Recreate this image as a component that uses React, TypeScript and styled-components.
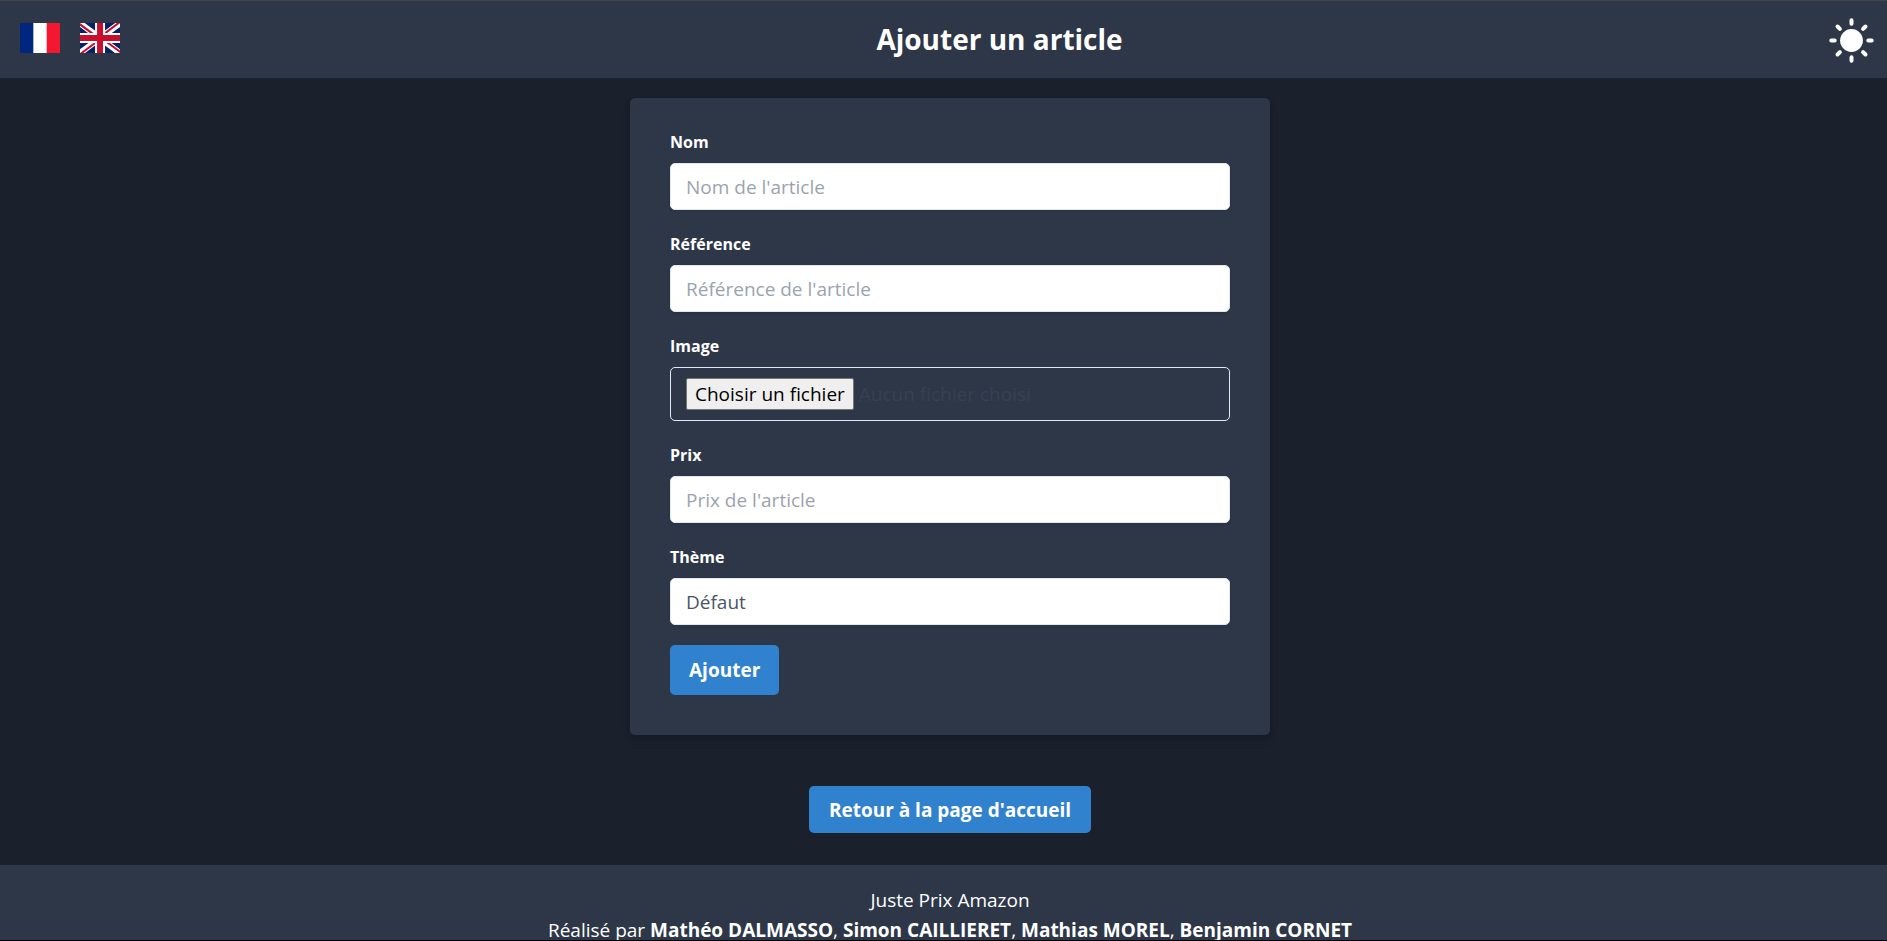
import React from "react";
import styled, { createGlobalStyle, css } from "styled-components";

const colors = {
  page: "#1a202c",
  surface: "#2d3748",
  line: "#e2e8f0",
  primary: "#3182ce",
  placeholder: "#9ca3af",
  text: "#4a5568",
};

const GlobalStyle = createGlobalStyle`
  *, *::before, *::after { box-sizing: border-box; }
  body {
    margin: 0;
    overflow: hidden;
    background: ${colors.page};
    color: #fff;
    font-family: "Segoe UI", "Open Sans", "Noto Sans", sans-serif;
    font-size: 19px;
    line-height: 30px;
  }
  h1, p { margin: 0; }
  button, input, select { font: inherit; }
`;

const Viewport = styled.div`
  height: 100vh;
  overflow: hidden;
  border-top: 1px solid #444;
  border-bottom: 1px solid #000;
`;

const Page = styled.div`
  display: flex;
  flex-direction: column;
  width: calc(100% + 13px);
`;

const Header = styled.header`
  display: flex;
  align-items: center;
  padding: 11px 20px 9px;
  background: ${colors.surface};
`;

const Languages = styled.nav`
  display: flex;
  gap: 20px;
  min-width: 156px;
  padding-bottom: 5px;
`;

const IconButton = styled.button`
  display: block;
  padding: 0;
  border: 0;
  background: none;
  cursor: pointer;

  svg { display: block; }
`;

const Title = styled.h1`
  flex: 1;
  padding-bottom: 4px;
  font-size: 28px;
  font-weight: 700;
  line-height: 40px;
  text-align: center;
`;

const Main = styled.main`
  display: flex;
  flex-direction: column;
  align-items: center;
  gap: 51px;
  padding: 20px 20px 32px;
`;

const Card = styled.form`
  display: flex;
  flex-direction: column;
  align-items: flex-start;
  gap: 20px;
  width: 100%;
  max-width: 640px;
  padding: 31px 40px 40px;
  border-radius: 5px;
  background: ${colors.surface};
  box-shadow: 0 5px 8px rgba(0, 0, 0, 0.1), 0 2px 5px rgba(0, 0, 0, 0.06);
`;

const Field = styled.div`
  display: flex;
  flex-direction: column;
  gap: 8px;
  width: 100%;
`;

const Label = styled.label`
  padding-top: 1px;
  font-size: 16px;
  font-weight: 700;
  line-height: 26px;

  ${Field}:first-child > & { padding-top: 0; }
`;

const control = css`
  width: 100%;
  height: 47px;
  padding: 1px 15px 0;
  border: 1px solid ${colors.line};
  border-radius: 5px;
  background: #fff;
  color: ${colors.text};
  box-shadow: 0 1px 3px rgba(0, 0, 0, 0.1);
`;

const TextInput = styled.input`
  ${control}
  &::placeholder { color: ${colors.placeholder}; opacity: 1; }
`;

const Select = styled.select`
  ${control}
  appearance: none;
`;

const FileBox = styled.div`
  position: relative;
  display: flex;
  align-items: center;
  gap: 5px;
  height: 54px;
  padding: 0 15px;
  border: 1px solid ${colors.line};
  border-radius: 5px;
  color: #374151;
`;

const FileInput = styled.input`
  position: absolute;
  inset: 0;
  width: 100%;
  opacity: 0;
  cursor: pointer;
`;

const FileButton = styled.span`
  padding: 0 8px;
  border: 1px solid #767676;
  border-radius: 2px;
  background: #efefef;
  color: #000;
`;

const action = css`
  border: 0;
  border-radius: 5px;
  background: ${colors.primary};
  color: #fff;
  font-weight: 700;
  text-decoration: none;
  cursor: pointer;
`;

const SubmitButton = styled.button`
  ${action}
  padding: 10px 19px;
`;

const HomeLink = styled.a`
  ${action}
  padding: 9px 20px 8px;
`;

const Footer = styled.footer`
  padding: 20px;
  background: ${colors.surface};
  text-align: center;
`;

const FrenchFlag = () => (
  <svg width="40" height="30" viewBox="0 0 640 480" aria-hidden="true">
    <path fill="#fff" d="M0 0h640v480H0z" />
    <path fill="#00267f" d="M0 0h213.3v480H0z" />
    <path fill="#f31830" d="M426.7 0H640v480H426.7z" />
  </svg>
);

const BritishFlag = () => (
  <svg width="40" height="30" viewBox="0 0 640 480" aria-hidden="true">
    <path fill="#012169" d="M0 0h640v480H0z" />
    <path fill="#fff" d="m75 0 244 181L562 0h78v62L400 241l240 178v61h-80L320 301 81 480H0v-60l239-178L0 64V0z" />
    <path fill="#c8102e" d="m424 281 216 159v40L369 281zm-184 20 6 35L54 480H0zM640 0v3L391 191l2-44L590 0zM0 0l239 176h-60L0 42z" />
    <path fill="#fff" d="M241 0v480h160V0zM0 160v160h640V160z" />
    <path fill="#c8102e" d="M0 193v96h640v-96zM273 0v480h96V0z" />
  </svg>
);

const SunIcon = () => (
  <svg width="57" height="57" viewBox="-28.5 -28.5 57 57" aria-hidden="true">
    <circle r="11.4" fill="#fff" />
    <path
      fill="none"
      stroke="#fff"
      strokeWidth="4"
      strokeLinecap="round"
      d="M0-20.2v3.4M0 16.8v3.4M-20.2 0h3.4M16.8 0h3.4M-14-14l2.4 2.4M11.6 11.6l2.4 2.4M-14 14l2.4-2.4M11.6-11.6l2.4-2.4"
    />
  </svg>
);

export default function App() {
  return (
    <Viewport lang="fr">
      <GlobalStyle />
      <Page>
        <Header>
          <Languages aria-label="Langue">
            <IconButton type="button" aria-label="Français"><FrenchFlag /></IconButton>
            <IconButton type="button" aria-label="English"><BritishFlag /></IconButton>
          </Languages>
          <Title>Ajouter un article</Title>
          <IconButton type="button" aria-label="Mode clair"><SunIcon /></IconButton>
        </Header>
        <Main>
          <Card onSubmit={(event) => event.preventDefault()}>
            <Field>
              <Label htmlFor="name">Nom</Label>
              <TextInput id="name" type="text" placeholder="Nom de l'article" />
            </Field>
            <Field>
              <Label htmlFor="reference">Référence</Label>
              <TextInput id="reference" type="text" placeholder="Référence de l'article" />
            </Field>
            <Field>
              <Label htmlFor="image">Image</Label>
              <FileBox>
                <FileButton>Choisir un fichier</FileButton>
                <span>Aucun fichier choisi</span>
                <FileInput id="image" type="file" accept="image/*" />
              </FileBox>
            </Field>
            <Field>
              <Label htmlFor="price">Prix</Label>
              <TextInput id="price" type="text" inputMode="decimal" placeholder="Prix de l'article" />
            </Field>
            <Field>
              <Label htmlFor="theme">Thème</Label>
              <Select id="theme" defaultValue="default">
                <option value="default">Défaut</option>
              </Select>
            </Field>
            <SubmitButton type="submit">Ajouter</SubmitButton>
          </Card>
          <HomeLink href="#accueil">Retour à la page d'accueil</HomeLink>
        </Main>
        <Footer>
          <p>Juste Prix Amazon</p>
          <p>
            Réalisé par <strong>Mathéo DALMASSO</strong>, <strong>Simon CAILLIERET</strong>,{" "}
            <strong>Mathias MOREL</strong>, <strong>Benjamin CORNET</strong>
          </p>
        </Footer>
      </Page>
    </Viewport>
  );
}
